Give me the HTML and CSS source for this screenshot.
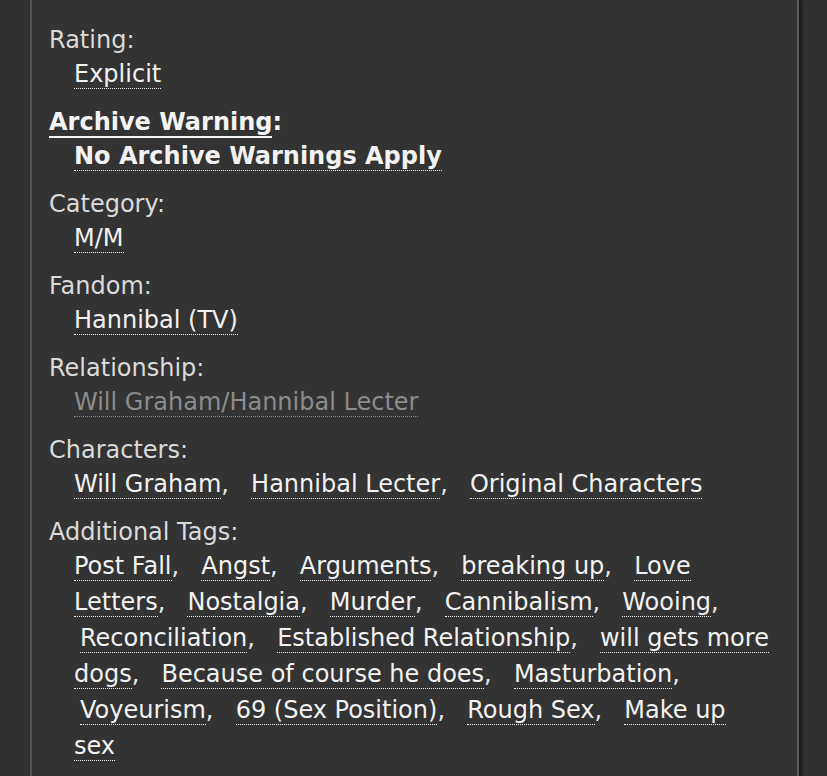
FILE: index.html
```html
<!DOCTYPE html>
<html lang="en">
<head>
<meta charset="utf-8">
<title>Work tags</title>
<link rel="stylesheet" href="styles.css">
</head>
<body>
<div class="panel">
  <dl class="meta">
    <dt>Rating:</dt>
    <dd><ul class="commas"><li><a class="tag" href="#">Explicit</a></li></ul></dd>

    <dt class="warning"><a class="help" href="#">Archive Warning</a>:</dt>
    <dd class="warning"><ul class="commas"><li><a class="tag" href="#">No Archive Warnings Apply</a></li></ul></dd>

    <dt>Category:</dt>
    <dd><ul class="commas"><li><a class="tag" href="#">M/M</a></li></ul></dd>

    <dt>Fandom:</dt>
    <dd><ul class="commas"><li><a class="tag" href="#">Hannibal (TV)</a></li></ul></dd>

    <dt>Relationship:</dt>
    <dd><ul class="commas"><li><a class="tag muted" href="#">Will Graham/Hannibal Lecter</a></li></ul></dd>

    <dt>Characters:</dt>
    <dd><ul class="commas">
      <li><a class="tag" href="#">Will Graham</a></li>
      <li><a class="tag" href="#">Hannibal Lecter</a></li>
      <li><a class="tag" href="#">Original Characters</a></li>
    </ul></dd>

    <dt>Additional Tags:</dt>
    <dd><ul class="commas">
      <li><a class="tag" href="#">Post Fall</a></li>
      <li><a class="tag" href="#">Angst</a></li>
      <li><a class="tag" href="#">Arguments</a></li>
      <li><a class="tag" href="#">breaking up</a></li>
      <li><a class="tag" href="#">Love Letters</a></li>
      <li><a class="tag" href="#">Nostalgia</a></li>
      <li><a class="tag" href="#">Murder</a></li>
      <li><a class="tag" href="#">Cannibalism</a></li>
      <li><a class="tag" href="#">Wooing</a></li>
      <li><a class="tag" href="#">Reconciliation</a></li>
      <li><a class="tag" href="#">Established Relationship</a></li>
      <li><a class="tag" href="#">will gets more dogs</a></li>
      <li><a class="tag" href="#">Because of course he does</a></li>
      <li><a class="tag" href="#">Masturbation</a></li>
      <li><a class="tag" href="#">Voyeurism</a></li>
      <li><a class="tag" href="#">69 (Sex Position)</a></li>
      <li><a class="tag" href="#">Rough Sex</a></li>
      <li><a class="tag" href="#">Make up sex</a></li>
    </ul></dd>
  </dl>
</div>
</body>
</html>
```

FILE: styles.css
```css
html, body {
  margin: 0;
  padding: 0;
  background: #313131;
  height: 100%;
  overflow: hidden;
}

body {
  font-family: "DejaVu Sans", Verdana, sans-serif;
  font-size: 24px;
  color: #dcdcdc;
}

.panel {
  margin-left: 30px;
  width: 723px;
  min-height: 900px;
  background: #333333;
  border-left: 2px solid #555555;
  border-right: 2px solid #5b5b5b;
  box-shadow: 3px 0 3px rgba(0, 0, 0, 0.45);
  padding: 24px 25px 0 17px;
}

.meta {
  margin: 0;
}

.meta dt {
  line-height: 32px;
  color: #dadada;
}

.meta dd {
  margin: 0 0 14px 0;
  padding-left: 25px;
  line-height: 36px;
}

.meta dt.warning {
  font-weight: bold;
  color: #f4f4f4;
}

.meta dd.warning {
  font-weight: bold;
}

.help {
  color: #f4f4f4;
  text-decoration: none;
  border-bottom: 2px solid #f4f4f4;
}

.commas {
  list-style: none;
  margin: 0;
  padding: 0;
}

.commas li {
  display: inline;
}

.commas li + li {
  padding-left: 6px;
}

.commas li::after {
  content: ",";
  margin-right: 8.5px;
  color: #e8e8e8;
}

.commas li:last-child::after {
  content: none;
}

.tag {
  color: #f2f2f2;
  text-decoration: none;
  border-bottom: 1px dotted #f2f2f2;
}

.tag.muted {
  color: #8c8c8c;
  border-bottom-color: #8c8c8c;
}
```
